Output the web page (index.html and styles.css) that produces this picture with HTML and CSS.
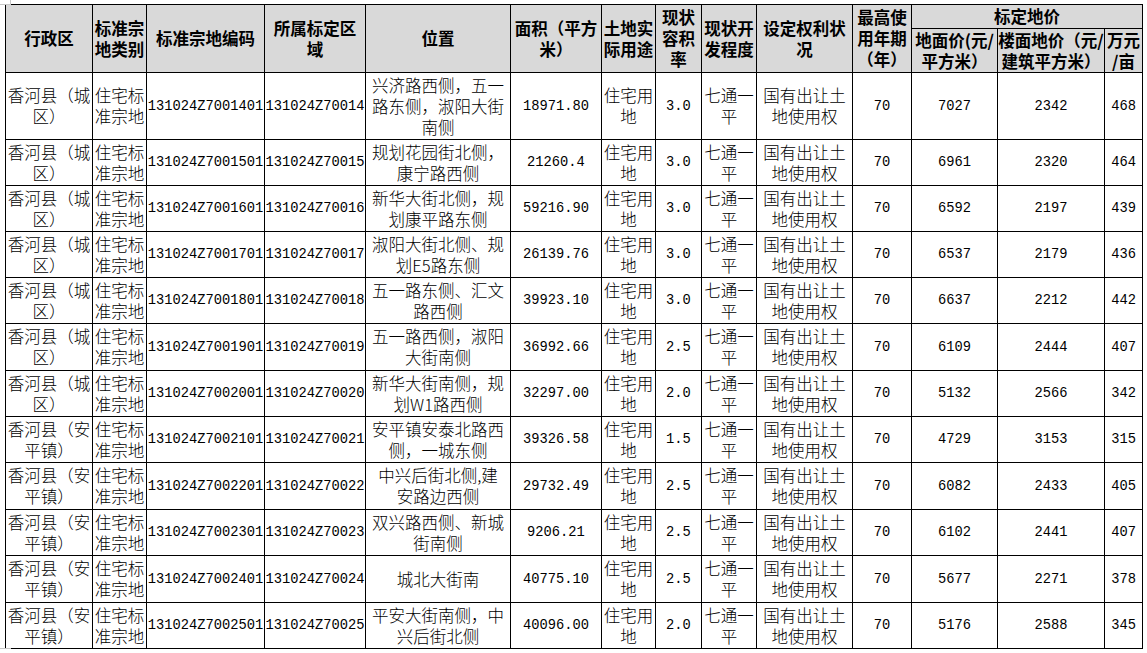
FILE: index.html
```html
<!DOCTYPE html>
<html lang="zh-CN">
<head>
<meta charset="utf-8">
<title>标定地价表</title>
<link rel="stylesheet" href="styles.css">
</head>
<body>
<div class="sheet">
<span class="handle handle-tl"></span>
<table class="grid">
<colgroup>
<col class="c1"><col class="c2"><col class="c3"><col class="c4"><col class="c5"><col class="c6"><col class="c7"><col class="c8"><col class="c9"><col class="c10"><col class="c11"><col class="c12"><col class="c13"><col class="c14">
</colgroup>
<thead>
<tr class="h1">
<th rowspan="2">行政区</th>
<th rowspan="2">标准宗
地类别</th>
<th rowspan="2">标准宗地编码</th>
<th rowspan="2">所属标定区
域</th>
<th rowspan="2">位置</th>
<th rowspan="2">面积（平方
米）</th>
<th rowspan="2">土地实
际用途</th>
<th rowspan="2">现状
容积
率</th>
<th rowspan="2">现状开
发程度</th>
<th rowspan="2">设定权利状
况</th>
<th rowspan="2">最高使
用年期
（年）</th>
<th colspan="3">标定地价</th>
</tr>
<tr class="h2">
<th>地面价(元/
平方米）</th>
<th>楼面地价（元/
建筑平方米）</th>
<th>万元
/亩</th>
</tr>
</thead>
<tbody>
<tr class="r67"><td>香河县（城
区）</td><td>住宅标
准宗地</td><td class="n">131024Z7001401</td><td class="n">131024Z70014</td><td>兴济路西侧，五一
路东侧，淑阳大街
南侧</td><td class="n">18971.80</td><td>住宅用
地</td><td class="n">3.0</td><td>七通一
平</td><td>国有出让土
地使用权</td><td class="n">70</td><td class="n">7027</td><td class="n">2342</td><td class="n">468</td></tr>
<tr class="r46"><td>香河县（城
区）</td><td>住宅标
准宗地</td><td class="n">131024Z7001501</td><td class="n">131024Z70015</td><td>规划花园街北侧，
康宁路西侧</td><td class="n">21260.4</td><td>住宅用
地</td><td class="n">3.0</td><td>七通一
平</td><td>国有出让土
地使用权</td><td class="n">70</td><td class="n">6961</td><td class="n">2320</td><td class="n">464</td></tr>
<tr class="r46"><td>香河县（城
区）</td><td>住宅标
准宗地</td><td class="n">131024Z7001601</td><td class="n">131024Z70016</td><td>新华大街北侧，规
划康平路东侧</td><td class="n">59216.90</td><td>住宅用
地</td><td class="n">3.0</td><td>七通一
平</td><td>国有出让土
地使用权</td><td class="n">70</td><td class="n">6592</td><td class="n">2197</td><td class="n">439</td></tr>
<tr class="r46"><td>香河县（城
区）</td><td>住宅标
准宗地</td><td class="n">131024Z7001701</td><td class="n">131024Z70017</td><td>淑阳大街北侧、规
划E5路东侧</td><td class="n">26139.76</td><td>住宅用
地</td><td class="n">3.0</td><td>七通一
平</td><td>国有出让土
地使用权</td><td class="n">70</td><td class="n">6537</td><td class="n">2179</td><td class="n">436</td></tr>
<tr class="r46"><td>香河县（城
区）</td><td>住宅标
准宗地</td><td class="n">131024Z7001801</td><td class="n">131024Z70018</td><td>五一路东侧、汇文
路西侧</td><td class="n">39923.10</td><td>住宅用
地</td><td class="n">3.0</td><td>七通一
平</td><td>国有出让土
地使用权</td><td class="n">70</td><td class="n">6637</td><td class="n">2212</td><td class="n">442</td></tr>
<tr class="r47"><td>香河县（城
区）</td><td>住宅标
准宗地</td><td class="n">131024Z7001901</td><td class="n">131024Z70019</td><td>五一路西侧，淑阳
大街南侧</td><td class="n">36992.66</td><td>住宅用
地</td><td class="n">2.5</td><td>七通一
平</td><td>国有出让土
地使用权</td><td class="n">70</td><td class="n">6109</td><td class="n">2444</td><td class="n">407</td></tr>
<tr class="r46"><td>香河县（城
区）</td><td>住宅标
准宗地</td><td class="n">131024Z7002001</td><td class="n">131024Z70020</td><td>新华大街南侧，规
划W1路西侧</td><td class="n">32297.00</td><td>住宅用
地</td><td class="n">2.0</td><td>七通一
平</td><td>国有出让土
地使用权</td><td class="n">70</td><td class="n">5132</td><td class="n">2566</td><td class="n">342</td></tr>
<tr class="r46"><td>香河县（安
平镇）</td><td>住宅标
准宗地</td><td class="n">131024Z7002101</td><td class="n">131024Z70021</td><td>安平镇安泰北路西
侧，一城东侧</td><td class="n">39326.58</td><td>住宅用
地</td><td class="n">1.5</td><td>七通一
平</td><td>国有出让土
地使用权</td><td class="n">70</td><td class="n">4729</td><td class="n">3153</td><td class="n">315</td></tr>
<tr class="r47"><td>香河县（安
平镇）</td><td>住宅标
准宗地</td><td class="n">131024Z7002201</td><td class="n">131024Z70022</td><td>中兴后街北侧,建
安路边西侧</td><td class="n">29732.49</td><td>住宅用
地</td><td class="n">2.5</td><td>七通一
平</td><td>国有出让土
地使用权</td><td class="n">70</td><td class="n">6082</td><td class="n">2433</td><td class="n">405</td></tr>
<tr class="r46"><td>香河县（安
平镇）</td><td>住宅标
准宗地</td><td class="n">131024Z7002301</td><td class="n">131024Z70023</td><td>双兴路西侧、新城
街南侧</td><td class="n">9206.21</td><td>住宅用
地</td><td class="n">2.5</td><td>七通一
平</td><td>国有出让土
地使用权</td><td class="n">70</td><td class="n">6102</td><td class="n">2441</td><td class="n">407</td></tr>
<tr class="r47"><td>香河县（安
平镇）</td><td>住宅标
准宗地</td><td class="n">131024Z7002401</td><td class="n">131024Z70024</td><td>城北大街南</td><td class="n">40775.10</td><td>住宅用
地</td><td class="n">2.5</td><td>七通一
平</td><td>国有出让土
地使用权</td><td class="n">70</td><td class="n">5677</td><td class="n">2271</td><td class="n">378</td></tr>
<tr class="r46"><td>香河县（安
平镇）</td><td>住宅标
准宗地</td><td class="n">131024Z7002501</td><td class="n">131024Z70025</td><td>平安大街南侧，中
兴后街北侧</td><td class="n">40096.00</td><td>住宅用
地</td><td class="n">2.0</td><td>七通一
平</td><td>国有出让土
地使用权</td><td class="n">70</td><td class="n">5176</td><td class="n">2588</td><td class="n">345</td></tr>
</tbody>
</table>
<span class="handle handle-bl"></span>
<span class="handle handle-br"></span>
</div>
</body>
</html>
```
FILE: styles.css
```css
html, body {
  margin: 0;
  padding: 0;
  background: #ffffff;
}
body {
  font-family: "Noto Sans CJK SC", "Noto Sans", sans-serif;
  font-size: 16.5px;
  color: #000;
}
.sheet {
  position: relative;
  padding: 4px 0 0 5px;
}
.grid {
  border-collapse: collapse;
  table-layout: fixed;
  width: 1137px;
}
.c1 { width: 87px; }
.c2 { width: 54px; }
.c3 { width: 118px; }
.c4 { width: 101px; }
.c5 { width: 145px; }
.c6 { width: 91px; }
.c7 { width: 54px; }
.c8 { width: 46px; }
.c9 { width: 55px; }
.c10 { width: 96px; }
.c11 { width: 59px; }
.c12 { width: 86px; }
.c13 { width: 107px; }
.c14 { width: 38px; }

.grid th,
.grid td {
  border: 1px solid #000;
  padding: 0;
  text-align: center;
  vertical-align: middle;
  white-space: pre;
  line-height: 21px;
  overflow: visible;
}
.grid td {
  font-weight: 300;
}
.grid th {
  background: #d9d9d9;
  font-weight: 700;
}
.h1 { height: 24px; }
.h2 { height: 44px; }
.r67 { height: 67px; }
.r46 { height: 46px; }
.r47 { height: 47px; }

.grid td.n {
  font-family: "Liberation Mono", "DejaVu Sans Mono", monospace;
  font-size: 13.75px;
  font-weight: 400;
}

.handle {
  position: absolute;
  border: 1px solid #c8c8c8;
  background: #fff;
  width: 11px;
  height: 11px;
}
.handle-tl { left: -2px; top: -8px; }
.handle-bl { left: -2px; top: 648px; }
.handle-br { left: 1133px; top: 650px; }
```
